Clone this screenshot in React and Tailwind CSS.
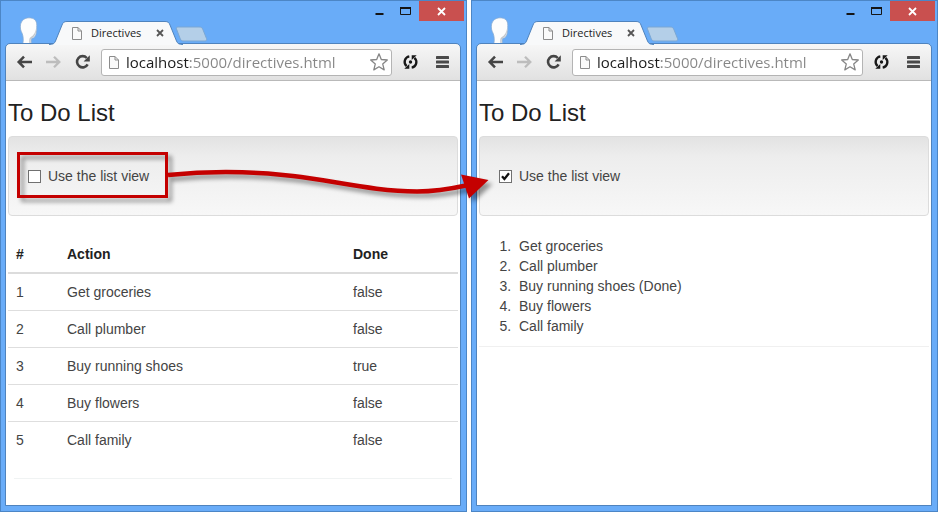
import { useState } from "react";

const todos = [
  { action: "Get groceries", complete: false },
  { action: "Call plumber", complete: false },
  { action: "Buy running shoes", complete: true },
  { action: "Buy flowers", complete: false },
  { action: "Call family", complete: false },
];

function PageIcon() {
  return (
    <svg width="12" height="15" viewBox="0 0 12 15" className="shrink-0" aria-hidden="true">
      <path d="M1.5 1.5h5.5l3.5 3.5v8.5h-9z" fill="#fafafa" stroke="#8c8c8c" />
      <path d="M7 1.5v3.5h3.5" fill="none" stroke="#8c8c8c" />
    </svg>
  );
}

function Avatar() {
  return (
    <svg width="20" height="27" viewBox="0 0 20 27" className="shrink-0" aria-hidden="true">
      <path
        d="M10 .8C15 .8 18 3.500 17.800 8.500C17.600 11 18 13 17.300 16C16.800 19.500 15 21.200 12.600 21.500C12 23 12.200 25 12.600 27H3.800C4.600 23 4.300 19.500 3.200 16.500C1.500 13.500 1 10.500 1.500 7.800C2.300 3.500 5.500 .9 10 .8Z"
        fill="#fdfdfd"
        stroke="#86abd3"
        strokeWidth=".8"
      />
      <path d="M17.200 11c0 4.500-.8 8.300-4 10-2 .6-1.700 3-1.200 6h-1.500c-.4-3-.6-6 1.400-7 3-1.500 4.500-5 5.300-9z" fill="#c3c8ce" />
    </svg>
  );
}

function TitleBar() {
  return (
    <div className="flex h-[43px] justify-between">
      <div className="flex items-end pl-[13px]">
        <Avatar />
        <div className="relative ml-[10px] h-[23px] w-[134px]">
          <svg width="134" height="24" viewBox="0 0 134 24" className="absolute left-0 top-0" aria-hidden="true">
            <path
              d="M0 23.500C4 23.500 5.500 22.500 6.500 20L13 4C14 1.500 15 .5 18 .5H116C119 .5 120 1.500 121 4L127.500 20C128.500 22.500 130 23.500 134 23.500V24H0Z"
              fill="#f8f9fa"
            />
            <path
              d="M0 23.500C4 23.500 5.500 22.500 6.500 20L13 4C14 1.500 15 .5 18 .5H116C119 .5 120 1.500 121 4L127.500 20C128.500 22.500 130 23.500 134 23.500"
              fill="none"
              stroke="#4f83bd"
            />
          </svg>
          <div className="relative flex h-6 items-center pl-[22px]">
            <PageIcon />
            <span className="ml-2 w-[65px] font-['Open_Sans',sans-serif] text-[11px] leading-4 text-[#222]">Directives</span>
            <button type="button" aria-label="Close tab">
              <svg width="8" height="8" viewBox="0 0 8 8">
                <path d="M1 1l6 6M7 1l-6 6" stroke="#555" strokeWidth="1.800" />
              </svg>
            </button>
          </div>
        </div>
        <button type="button" aria-label="New tab" className="-ml-2 mb-[2px]">
          <svg width="33" height="16" viewBox="0 0 33 16">
            <path
              d="M3 1H24C26 1 27 1.500 27.700 3L31.500 12.500C32 14 31.500 15 30 15H9C7 15 6 14.500 5.300 13L1.500 3C1 1.800 1.500 1 3 1Z"
              fill="#b4cfe8"
              stroke="#7ba7d4"
            />
          </svg>
        </button>
      </div>
      <div className="-mr-1 flex h-5">
        <button type="button" aria-label="Minimize" className="flex w-[26px] items-center justify-center">
          <svg width="9" height="12" viewBox="0 0 9 12">
            <path d="M.5 8h8v2h-8z" fill="#151515" />
          </svg>
        </button>
        <button type="button" aria-label="Maximize" className="flex w-[27px] items-center justify-center">
          <svg width="11" height="10" viewBox="0 0 11 10">
            <path d="M.5 1.500h10v7h-10z" fill="none" stroke="#151515" />
            <path d="M0 1h11v2h-11z" fill="#151515" />
          </svg>
        </button>
        <button type="button" aria-label="Close window" className="flex w-[45px] items-center justify-center bg-[#c9504f]">
          <svg width="9" height="9" viewBox="0 0 9 9">
            <path d="M1 1l7 7M8 1l-7 7" stroke="#fff" strokeWidth="1.800" />
          </svg>
        </button>
      </div>
    </div>
  );
}

function Toolbar() {
  return (
    <div className="flex h-[37px] items-center rounded-t-[3px] border-b border-[#b9b9b9] bg-linear-to-b from-[#f7f7f7] to-[#e1e1e1] px-[10px]">
      <div className="mr-[10px] flex gap-3">
        <button type="button" aria-label="Back">
          <svg width="17" height="16" viewBox="0 0 17 16" fill="none" stroke="#454545" strokeWidth="2.500">
            <path d="M16 8H3M8 2.700L2.700 8L8 13.300" />
          </svg>
        </button>
        <button type="button" aria-label="Forward">
          <svg width="17" height="16" viewBox="0 0 17 16" fill="none" stroke="#bdbdbd" strokeWidth="2.300">
            <path d="M1 8H14M9 2.700L14.300 8L9 13.300" />
          </svg>
        </button>
        <button type="button" aria-label="Reload">
          <svg width="17" height="16" viewBox="0 0 17 16">
            <path d="M12.800 4A5.600 5.600 0 1 0 13.600 10.300" fill="none" stroke="#454545" strokeWidth="2.600" />
            <path d="M15.800 1.200V7.400H9.600Z" fill="#454545" />
          </svg>
        </button>
      </div>
      <div className="flex h-[27px] min-w-0 flex-1 items-center rounded-[3px] border border-[#b4b4b4] bg-white pl-[6px] pr-[3px]">
        <PageIcon />
        <input
          type="text"
          aria-label="Address"
          defaultValue="localhost:5000/directives.html"
          className="ml-[6px] h-6 min-w-0 flex-1 bg-linear-to-r from-[#1c1c1c] from-[64px] to-[#868686] to-[64px] bg-clip-text font-['Open_Sans',sans-serif] text-[15px] leading-6 text-transparent outline-none"
        />
        <button type="button" aria-label="Bookmark">
          <svg width="18" height="18" viewBox="0 0 18 18">
            <path
              d="M9 .8L11.300 6.500L17.300 7L12.700 10.900L14.200 16.900L9 13.700L3.800 16.900L5.300 10.900L.7 7L6.700 6.500Z"
              fill="#fff"
              stroke="#868686"
              strokeWidth="1.300"
              strokeLinejoin="round"
            />
          </svg>
        </button>
      </div>
      <div className="ml-[10px] flex items-center gap-4">
        <button type="button" aria-label="Sync">
          <svg width="17" height="16" viewBox="0 0 17 16">
            <path d="M7.300 2.300A5.700 5.700 0 0 0 4.600 12.200M9.700 13.700A5.700 5.700 0 0 0 12.400 3.800" fill="none" stroke="#181818" strokeWidth="2.300" />
            <path d="M2.300 14.700H7.300V10ZM14.700 1.300H9.700V6Z" fill="#181818" />
            <circle cx="8.500" cy="8" r="1.700" fill="#181818" />
          </svg>
        </button>
        <button type="button" aria-label="Menu">
          <svg width="15" height="14" viewBox="0 0 15 14" fill="#4a4a4a">
            <rect x="1" y="1" width="13" height="3" rx=".6" />
            <rect x="1" y="5.500" width="13" height="3" rx=".6" />
            <rect x="1" y="10" width="13" height="3" rx=".6" />
          </svg>
        </button>
      </div>
    </div>
  );
}

function TodoTable() {
  return (
    <>
      <table className="w-full table-fixed border-collapse text-left">
        <colgroup>
          <col className="w-[51px]" />
          <col />
          <col className="w-[113px]" />
        </colgroup>
        <thead>
          <tr className="border-b-2 border-[#dcdcdc] text-[#222]">
            <th className="p-2">#</th>
            <th className="p-2">Action</th>
            <th className="p-2">Done</th>
          </tr>
        </thead>
        <tbody>
          {todos.map((item, i) => (
            <tr key={item.action} className="border-b border-[#dedede] last:border-b-0">
              <td className="p-2">{i + 1}</td>
              <td className="p-2">{item.action}</td>
              <td className="p-2">{String(item.complete)}</td>
            </tr>
          ))}
        </tbody>
      </table>
      <hr className="mx-[6px] mt-5 border-[#f0f3f3]" />
    </>
  );
}

function TodoOrderedList() {
  return (
    <>
      <ol className="list-decimal pl-9">
        {todos.map((item) => (
          <li key={item.action} className="pl-1">
            {item.action}
            {item.complete && " (Done)"}
          </li>
        ))}
      </ol>
      <hr className="mt-[10px] border-[#f0f0f0]" />
    </>
  );
}

function BrowserWindow({ initialListView }) {
  const [listView, setListView] = useState(initialListView);
  return (
    <section className="flex min-w-0 flex-1 flex-col border border-[#4c86c6] bg-[#69acf8] pb-[6px] pl-[5px] pr-[6px]">
      <TitleBar />
      <div className="flex flex-1 flex-col rounded-t-[4px] bg-white outline-1 outline-[#4f83bd]">
        <Toolbar />
        <main className="flex-1 px-[2px] pt-[19px] text-sm text-[#444]">
          <h1 className="text-2xl leading-[26px] text-[#222]">To Do List</h1>
          <div className="mb-5 mt-[10px] rounded-[4px] border border-[#dcdcdc] bg-linear-to-b from-[#e3e3e3] via-[#ededed] via-25% to-[#f7f7f7] px-[19px] py-[29px]">
            <label className="flex w-fit items-center gap-[7px]">
              <span className="grid place-items-center">
                <input
                  type="checkbox"
                  checked={listView}
                  onChange={(e) => setListView(e.target.checked)}
                  className="col-start-1 row-start-1 size-[13px] appearance-none border border-[#707070] bg-white"
                />
                {listView && (
                  <svg width="11" height="11" viewBox="0 0 11 11" className="pointer-events-none col-start-1 row-start-1" aria-hidden="true">
                    <path d="M2 5.300L4.400 8L9 2.300" fill="none" stroke="#111" strokeWidth="2.300" />
                  </svg>
                )}
              </span>
              Use the list view
            </label>
          </div>
          {listView ? <TodoOrderedList /> : <TodoTable />}
        </main>
      </div>
    </section>
  );
}

function Callout() {
  return (
    <svg
      width="500"
      height="210"
      viewBox="0 0 500 210"
      className="pointer-events-none absolute left-0 top-0 drop-shadow-[4px_4px_2px_rgba(0,0,0,0.4)]"
      aria-hidden="true"
    >
      <rect x="18.500" y="153.500" width="148" height="43" fill="none" stroke="#c40000" strokeWidth="3" />
      <path
        d="M168 175C208 171 250 171 293 176C335 181 375 191.500 417 191.500C435 191.500 450 189 466 185.500"
        fill="none"
        stroke="#c40000"
        strokeWidth="4.500"
      />
      <path d="M461 174.500L488.500 180L469 198.500Z" fill="#c40000" />
    </svg>
  );
}

export default function App() {
  return (
    <div className="relative flex min-h-screen w-full gap-1 bg-white font-['Liberation_Sans',Arial,sans-serif]">
      <BrowserWindow initialListView={false} />
      <BrowserWindow initialListView={true} />
      <Callout />
    </div>
  );
}
